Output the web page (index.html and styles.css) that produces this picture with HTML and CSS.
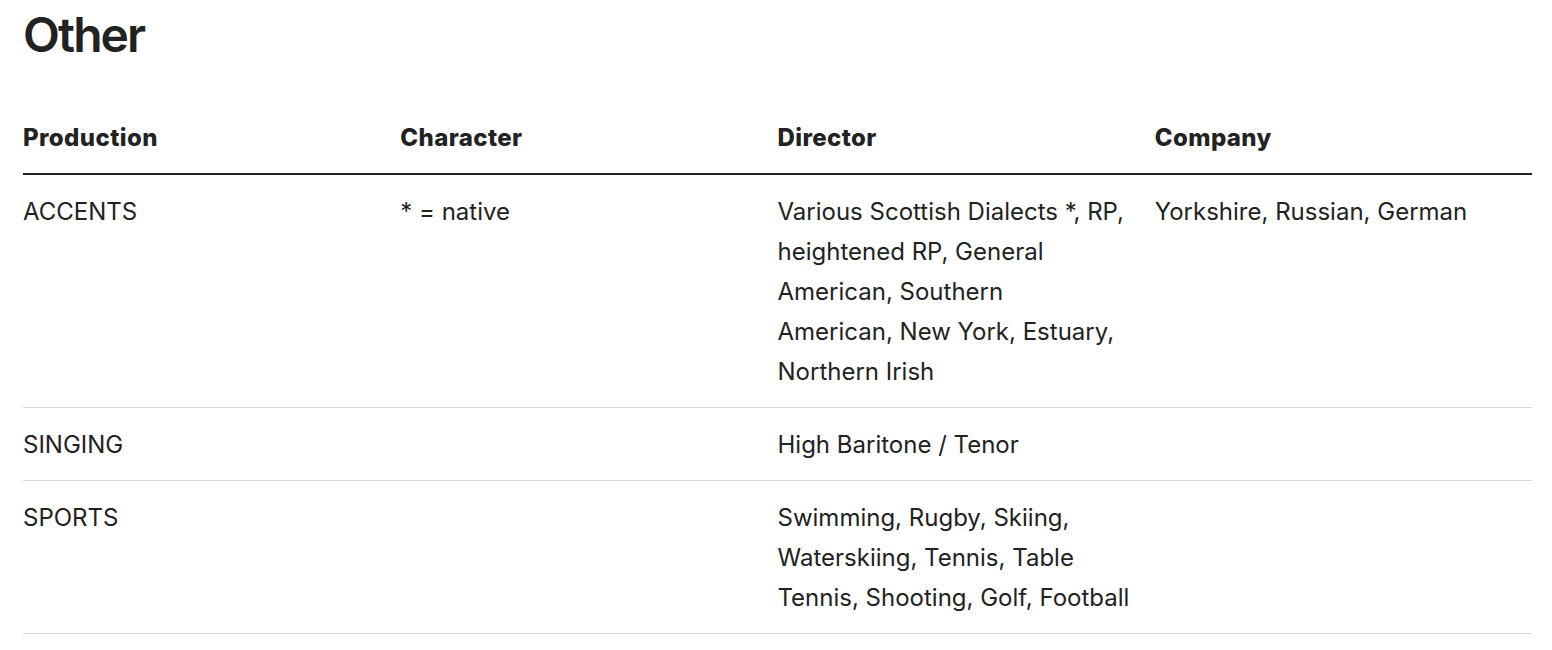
FILE: index.html
```html
<!DOCTYPE html>
<html>
<head>
<meta charset="utf-8">
<link rel="stylesheet" href="styles.css">
</head>
<body>
<section class="section">
  <h2 class="title">Other</h2>
  <table class="credits">
    <thead>
      <tr>
        <th>Production</th>
        <th>Character</th>
        <th>Director</th>
        <th>Company</th>
      </tr>
    </thead>
    <tbody>
      <tr>
        <td>ACCENTS</td>
        <td>* = native</td>
        <td>Various Scottish Dialects *, RP, heightened RP, General American, Southern<br>American, New York, Estuary, Northern Irish</td>
        <td>Yorkshire, Russian, German</td>
      </tr>
      <tr>
        <td>SINGING</td>
        <td></td>
        <td>High Baritone / Tenor</td>
        <td></td>
      </tr>
      <tr>
        <td>SPORTS</td>
        <td></td>
        <td>Swimming, Rugby, Skiing, Waterskiing, Tennis, Table Tennis, Shooting, Golf, Football</td>
        <td></td>
      </tr>
    </tbody>
  </table>
</section>
</body>
</html>
```
FILE: styles.css
```css
html, body {
  margin: 0;
  padding: 0;
  background: #fff;
}
body {
  font-family: Inter, "Noto Sans", sans-serif;
  color: #222;
}
.section {
  padding: 6px 20px 0 23px;
}
.title {
  margin: 0 0 37px 0;
  font-size: 48px;
  line-height: 58px;
  font-weight: 600;
  letter-spacing: -1.9px;
  color: #222;
}
.credits {
  width: 1509px;
  border-collapse: collapse;
  table-layout: fixed;
}
.credits th,
.credits td {
  text-align: left;
  vertical-align: top;
  padding: 17px 20px 15px 0;
  font-size: 24px;
  line-height: 40px;
}
.credits th {
  font-weight: 800;
  letter-spacing: 0.4px;
  border-bottom: 2px solid #222;
}
.credits td {
  font-weight: 400;
  border-bottom: 1px solid #d8d8d8;
}
```
